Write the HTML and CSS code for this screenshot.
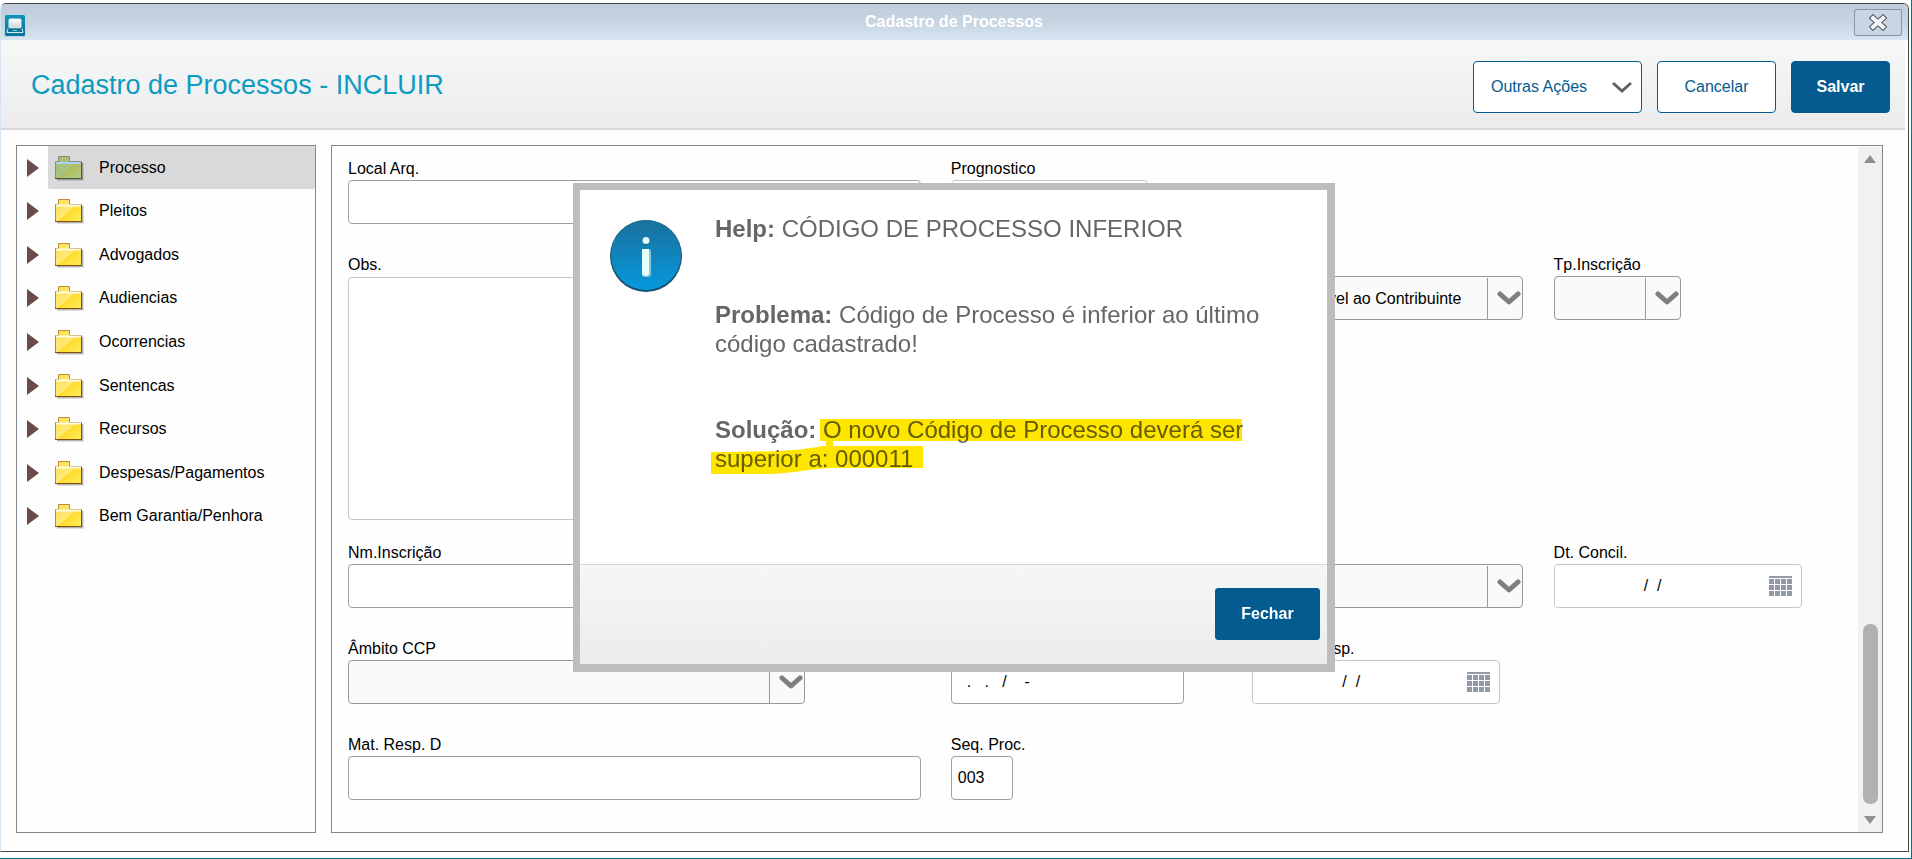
FILE: index.html
```html
<!DOCTYPE html>
<html lang="pt-BR">
<head>
  <meta charset="UTF-8">
  <meta name="viewport" content="width=device-width, initial-scale=1.0">
  <title>Cadastro de Processos</title>
  <link rel="stylesheet" href="styles.css">
</head>
<body>
  <svg class="sprite" aria-hidden="true">
    <defs>
      <linearGradient id="folderFill" x1="0" y1="0" x2="1" y2="1">
        <stop offset="0" stop-color="#ffe04e"/>
        <stop offset="0.5" stop-color="#ffe978"/>
        <stop offset="0.55" stop-color="#ffdc2e"/>
        <stop offset="1" stop-color="#ffee5a"/>
      </linearGradient>
      <linearGradient id="folderActive" x1="0" y1="0" x2="1" y2="1">
        <stop offset="0" stop-color="#a8ba75"/>
        <stop offset="0.5" stop-color="#a5c580"/>
        <stop offset="0.55" stop-color="#b3bb5e"/>
        <stop offset="1" stop-color="#aed08a"/>
      </linearGradient>
      <linearGradient id="infoFill" x1="0" y1="0" x2="0" y2="1">
        <stop offset="0" stop-color="#19709b"/>
        <stop offset="1" stop-color="#0699dc"/>
      </linearGradient>
      <linearGradient id="appFill" x1="0" y1="0" x2="0" y2="1">
        <stop offset="0" stop-color="#1295b7"/>
        <stop offset="1" stop-color="#0a7396"/>
      </linearGradient>
      <linearGradient id="screenFill" x1="0" y1="0" x2="0" y2="1">
        <stop offset="0" stop-color="#ffffff"/>
        <stop offset="1" stop-color="#c9d3da"/>
      </linearGradient>
    </defs>
    <symbol id="arrow" viewBox="0 0 12 18">
      <path d="M0 0L12 9L0 18z" fill="#6b4b49"/>
    </symbol>
    <symbol id="folder" viewBox="0 0 30 28">
      <path d="M2 7h27v18H2z" fill="#000" opacity="0.12"/>
      <path d="M2 7h26v17H2z" fill="#000" opacity="0.2"/>
      <path d="M0.5 22.5V5.5H3.5V0.5H14.5V5.5H26.5V22.5z" fill="url(#folderFill)" stroke="#b98d3c"/>
      <path d="M1 6.5h25" stroke="#fffbe0" stroke-width="2"/>
      <path d="M0 22.5h27M26.5 6v17" stroke="#85500c"/>
    </symbol>
    <symbol id="folder-active" viewBox="0 0 30 28">
      <path d="M2 7h27v18H2z" fill="#000" opacity="0.12"/>
      <path d="M2 7h26v17H2z" fill="#000" opacity="0.2"/>
      <path d="M0.5 22.5V5.5H3.5V0.5H14.5V5.5H26.5V22.5z" fill="url(#folderActive)" stroke="#84907a"/>
      <path d="M1 7h25" stroke="#a9d2f2" stroke-width="2"/>
      <path d="M0 22.5h27M26.5 6v17" stroke="#4d5740"/>
    </symbol>
    <symbol id="chevron" viewBox="0 0 24 14">
      <path d="M3 3L12 11L21 3" fill="none" stroke="#7f7f7f" stroke-width="5" stroke-linecap="round" stroke-linejoin="round"/>
    </symbol>
    <symbol id="calendar" viewBox="0 0 23 20">
      <path d="M0 0h23v2H0zM0 3h5v5H0zM6 3h5v5H6zM12 3h5v5H12zM18 3h5v5H18zM0 9h5v5H0zM6 9h5v5H6zM12 9h5v5H12zM18 9h5v5H18zM0 15h5v5H0zM6 15h5v5H6zM12 15h5v5H12zM18 15h5v5H18z" fill="#9299a7"/>
    </symbol>
  </svg>

  <div class="window">
    <div class="titlebar">
      <svg class="app-icon" width="22" height="23" viewBox="0 0 22 23">
        <rect x="0.5" y="0.5" width="21" height="22" rx="2" fill="url(#appFill)" stroke="#b9dbe8"/>
        <rect x="5" y="5" width="12" height="9" rx="1" fill="url(#screenFill)" stroke="#e6f1f6"/>
        <path d="M4 14.5L3 18.5H19L18 14.5" fill="#0a7396" stroke="#d5e6ee"/>
        <path d="M9 16.5h4" stroke="#9ec7d8"/>
      </svg>
      <span class="titlebar-text">Cadastro de Processos</span>
      <button class="close" type="button" aria-label="Fechar janela">
        <svg width="19" height="17" viewBox="0 0 19 17">
          <path d="M4 4L14 13M14 4L4 13" stroke="#50545e" stroke-width="6" stroke-linecap="square"/>
          <path d="M4 4L14 13M14 4L4 13" stroke="#f4f5f6" stroke-width="4" stroke-linecap="square"/>
        </svg>
      </button>
    </div>

    <div class="header">
      <h1>Cadastro de Processos - INCLUIR</h1>
      <div class="actions">
        <button class="btn btn-menu" type="button">Outras Ações
          <svg width="20" height="13" viewBox="0 0 20 13"><path d="M1 2L10 10L19 2" fill="none" stroke="#5f6368" stroke-width="3"/></svg>
        </button>
        <button class="btn btn-cancel" type="button">Cancelar</button>
        <button class="btn btn-primary" type="button">Salvar</button>
      </div>
    </div>

    <div class="content">
      <ul class="tree">
        <li class="active"><svg class="arrow"><use href="#arrow"/></svg><a href="#"><svg class="folder"><use href="#folder-active"/></svg>Processo</a></li>
        <li><svg class="arrow"><use href="#arrow"/></svg><a href="#"><svg class="folder"><use href="#folder"/></svg>Pleitos</a></li>
        <li><svg class="arrow"><use href="#arrow"/></svg><a href="#"><svg class="folder"><use href="#folder"/></svg>Advogados</a></li>
        <li><svg class="arrow"><use href="#arrow"/></svg><a href="#"><svg class="folder"><use href="#folder"/></svg>Audiencias</a></li>
        <li><svg class="arrow"><use href="#arrow"/></svg><a href="#"><svg class="folder"><use href="#folder"/></svg>Ocorrencias</a></li>
        <li><svg class="arrow"><use href="#arrow"/></svg><a href="#"><svg class="folder"><use href="#folder"/></svg>Sentencas</a></li>
        <li><svg class="arrow"><use href="#arrow"/></svg><a href="#"><svg class="folder"><use href="#folder"/></svg>Recursos</a></li>
        <li><svg class="arrow"><use href="#arrow"/></svg><a href="#"><svg class="folder"><use href="#folder"/></svg>Despesas/Pagamentos</a></li>
        <li><svg class="arrow"><use href="#arrow"/></svg><a href="#"><svg class="folder"><use href="#folder"/></svg>Bem Garantia/Penhora</a></li>
      </ul>

      <div class="panel">
        <form class="form">
          <div class="field col-1 row-1 w-full">
            <label for="localArq">Local Arq.</label>
            <input type="text" id="localArq">
          </div>
          <div class="field col-3 row-1 w-small">
            <label for="prognostico">Prognostico</label>
            <input type="text" id="prognostico" class="light">
          </div>

          <div class="field col-1 row-2 w-full">
            <label for="obs">Obs.</label>
            <textarea id="obs"></textarea>
          </div>
          <div class="field col-4 row-2 w-wide">
            <div class="select align-right no-label">
              <select aria-label="Aplicação"><option>Aplicável ao Contribuinte</option></select>
              <svg><use href="#chevron"/></svg>
            </div>
          </div>
          <div class="field col-5 row-2 w-select">
            <label for="tpInscricao">Tp.Inscrição</label>
            <div class="select">
              <select id="tpInscricao"><option></option></select>
              <svg><use href="#chevron"/></svg>
            </div>
          </div>

          <div class="field col-1 row-3 w-full">
            <label for="nmInscricao">Nm.Inscrição</label>
            <input type="text" id="nmInscricao">
          </div>
          <div class="field col-4 row-3 w-wide">
            <div class="select no-label">
              <select aria-label="Tipo"><option></option></select>
              <svg><use href="#chevron"/></svg>
            </div>
          </div>
          <div class="field col-5 row-3 w-date">
            <label for="dtConcil">Dt. Concil.</label>
            <div class="date">
              <input type="text" id="dtConcil" value="/  /">
              <button type="button" aria-label="Abrir calendário"><svg><use href="#calendar"/></svg></button>
            </div>
          </div>

          <div class="field col-1 row-4 w-ambito">
            <label for="ambito">Âmbito CCP</label>
            <div class="select">
              <select id="ambito"><option></option></select>
              <svg><use href="#chevron"/></svg>
            </div>
          </div>
          <div class="field col-3 row-4 w-cnpj">
            <input type="text" class="no-label" aria-label="CNPJ" value="  .   .   /    -">
          </div>
          <div class="field col-4 row-4 w-date">
            <label for="dtResp">Data da Resp.</label>
            <div class="date">
              <input type="text" id="dtResp" value="/  /">
              <button type="button" aria-label="Abrir calendário"><svg><use href="#calendar"/></svg></button>
            </div>
          </div>

          <div class="field col-1 row-5 w-full">
            <label for="matResp">Mat. Resp. D</label>
            <input type="text" id="matResp">
          </div>
          <div class="field col-3 row-5 w-seq">
            <label for="seqProc">Seq. Proc.</label>
            <input type="text" id="seqProc" value="003">
          </div>
        </form>
        <div class="scrollbar">
          <svg width="12" height="8" viewBox="0 0 12 8"><path d="M6 0L12 8H0z" fill="#8f8f8f"/></svg>
          <div class="thumb"></div>
          <svg width="12" height="8" viewBox="0 0 12 8"><path d="M0 0H12L6 8z" fill="#8f8f8f"/></svg>
        </div>
      </div>
    </div>
  </div>

  <div class="overlay">
    <div class="modal" role="dialog" aria-label="Help">
      <div class="modal-body">
        <svg class="info" width="72" height="72" viewBox="0 0 72 72">
          <circle cx="36" cy="36" r="36" fill="#174f6c"/>
          <circle cx="36" cy="35" r="35" fill="url(#infoFill)"/>
          <circle cx="36" cy="21" r="4" fill="#174f6c" opacity="0.5"/>
          <circle cx="36" cy="20.5" r="3.5" fill="#e4ffff"/>
          <rect x="32" y="29" width="9" height="28" rx="3" fill="#8cc4da"/>
          <path d="M32 29H39V53Q39 56 35.5 56Q32 56 32 53z" fill="#e4ffff"/>
        </svg>
        <div class="modal-text">
          <p><strong>Help:</strong> CÓDIGO DE PROCESSO INFERIOR</p>
          <p><strong>Problema:</strong> Código de Processo é inferior ao último código cadastrado!</p>
          <p class="solution"><strong>Solução:</strong> O novo Código de Processo deverá ser superior a: 000011
            <svg class="marker" width="540" height="62" viewBox="0 0 540 62">
              <path d="M111 4H533V26H124V31H214V53H121C101 54 86 58 61 59H2V37C41 37 86 37 113 31H117V26H111z" fill="#ffe600"/>
            </svg>
          </p>
        </div>
      </div>
      <div class="modal-footer">
        <button class="btn btn-primary btn-close" type="button">Fechar</button>
      </div>
    </div>
  </div>
</body>
</html>
```
FILE: styles.css
```css
* {
  box-sizing: border-box;
}

body {
  margin: 0;
  height: 100vh;
  padding: 3px 2px 6px 0;
  border-right: 1px solid #007588;
  border-bottom: 1px solid #007588;
  font-family: "Liberation Sans", Arial, sans-serif;
  font-size: 16px;
  color: #000;
  background: #fff;
  overflow: hidden;
}

button, input, select, textarea {
  font: inherit;
  color: inherit;
}

.sprite {
  position: absolute;
  width: 0;
  height: 0;
}

.window {
  display: flex;
  flex-direction: column;
  height: 100%;
  border: 1px solid #45464a;
  border-left-color: #d6e3f1;
  border-radius: 6px 6px 0 0;
  background: #fefefe;
  overflow: hidden;
}

/* title bar */
.titlebar {
  display: flex;
  align-items: center;
  height: 36px;
  padding: 0 6px 0 3px;
  background: linear-gradient(#c0cddb, #c6d3e1 50%, #d7e4f2);
}

.app-icon {
  margin-top: 6px;
}

.titlebar-text {
  flex: 1;
  padding: 0 0 1px 28px;
  text-align: center;
  font-weight: bold;
  color: #fff;
}

.close {
  display: flex;
  align-items: center;
  justify-content: center;
  width: 48px;
  height: 27px;
  padding: 0;
  border: 1px solid #8396ae;
  border-radius: 2px;
  background: #c8d5e3;
}

/* header */
.header {
  display: flex;
  align-items: flex-start;
  justify-content: space-between;
  height: 90px;
  margin-right: 3px;
  padding: 21px 15px 0 30px;
  border-bottom: 2px solid #d9dadc;
  background: linear-gradient(#f6f8f7, #ececef);
}

.header h1 {
  margin: 6px 0 0;
  font-size: 27px;
  line-height: 36px;
  font-weight: normal;
  color: #0d9bbf;
}

.actions {
  display: flex;
  gap: 15px;
}

.btn {
  height: 52px;
  padding: 0;
  border: 1px solid #045b90;
  border-radius: 4px;
  background: #fff;
  color: #045b90;
  cursor: pointer;
}

.btn-menu {
  display: flex;
  align-items: center;
  justify-content: space-between;
  width: 169px;
  padding: 0 9px 0 17px;
}

.btn-cancel {
  width: 119px;
}

.btn-primary {
  width: 99px;
  background: #045b90;
  color: #fff;
  font-weight: bold;
}

/* content */
.content {
  flex: 1;
  display: flex;
  gap: 15px;
  padding: 15px 25px 18px 15px;
}

.tree {
  width: 300px;
  margin: 0;
  padding: 0 0 294px;
  border: 1px solid #82868f;
  list-style: none;
  display: grid;
  grid-template-rows: repeat(9, minmax(0, 1fr));
}

.tree li {
  display: flex;
  align-items: center;
}

.tree a {
  flex: 1;
  display: flex;
  align-items: center;
  gap: 14px;
  height: 43px;
  padding-left: 7px;
  border-radius: 2px;
  color: #000;
  text-decoration: none;
}

.tree .active a {
  background: #d9d9d9;
}

.arrow {
  width: 12px;
  height: 18px;
  margin: 0 9px 0 10px;
}

.folder {
  width: 30px;
  height: 28px;
  margin-top: 4px;
}

.panel {
  flex: 1;
  display: flex;
  border: 1px solid #82868f;
}

.form {
  flex: 1;
  display: grid;
  grid-template-columns: repeat(5, 1fr);
  grid-template-rows: 96px 288px 96px 96px 96px;
  padding: 14px 3px 0 16px;
}

.col-1 { grid-column: 1 / span 2; }
.col-3 { grid-column: 3; }
.col-4 { grid-column: 4; }
.col-5 { grid-column: 5; }
.row-1 { grid-row: 1; }
.row-2 { grid-row: 2; }
.row-3 { grid-row: 3; }
.row-4 { grid-row: 4; }
.row-5 { grid-row: 5; }

.w-full { width: 95%; }
.w-small { width: 197px; }
.w-wide { width: 90%; }
.w-select { width: 127px; }
.w-date { width: 248px; }
.w-ambito { width: 457px; }
.w-cnpj { width: 233px; }
.w-seq { width: 62px; }

.field label {
  display: block;
  height: 20px;
  line-height: 18px;
  white-space: nowrap;
}

.field input, .field select, .field textarea {
  display: block;
  width: 100%;
  height: 44px;
  padding: 0 6px;
  border: 1px solid #97a2a5;
  border-radius: 4px;
  background: #fff;
}

.field textarea {
  height: 243px;
  margin-top: 1px;
  border-color: #c4c8c8;
  resize: none;
}

.field .light {
  border-color: #c4c8c8;
}

.field .no-label {
  margin-top: 20px;
}

.select {
  position: relative;
}

.field select {
  appearance: none;
  padding-right: 61px;
  border-color: #999;
  background: linear-gradient(#999, #999) right 34px top 1px / 1px 100% no-repeat #fafafa;
}

.align-right select {
  text-align: right;
  text-align-last: right;
}

.select svg {
  position: absolute;
  right: 2px;
  top: 15px;
  width: 24px;
  height: 14px;
  pointer-events: none;
}

.date {
  display: flex;
  height: 44px;
  padding-right: 9px;
  border: 1px solid #c4c8c8;
  border-radius: 4px;
  background: #fff;
}

.date .no-label {
  margin: 0;
}

.date input {
  flex: 1;
  min-width: 0;
  height: 42px;
  padding: 0 18px 0 0;
  border: none;
  text-align: center;
}

.date button {
  display: flex;
  align-items: center;
  padding: 0;
  border: none;
  background: none;
}

.date svg {
  width: 23px;
  height: 20px;
}

.scrollbar {
  display: flex;
  flex-direction: column;
  align-items: center;
  width: 24px;
  margin-top: 1px;
  padding: 8px 0;
  background: #f1f1f1;
}

.thumb {
  width: 15px;
  height: 180px;
  margin: auto 0 12px;
  border-radius: 7px;
  background: #b1b1b1;
}

/* modal */
.overlay {
  position: fixed;
  inset: 0;
  display: flex;
  align-items: flex-start;
  justify-content: center;
  padding-top: 183px;
  padding-right: 4px;
}

.modal {
  width: 762px;
  border: 7px solid #bdbdbd;
  border-right-width: 8px;
  border-bottom-width: 8px;
  background: #fff;
}

.modal-body {
  display: flex;
  gap: 33px;
  min-height: 374px;
  padding: 24px 16px 0 30px;
}

.info {
  flex: none;
  margin-top: 6px;
}

.modal-text {
  font-size: 24px;
  line-height: 29px;
  color: #666;
}

.modal-text p {
  margin: 0 0 57px;
}

.solution {
  position: relative;
}

/* highlighter stroke over the answer */
.marker {
  position: absolute;
  left: -6px;
  top: 0;
  mix-blend-mode: multiply;
}

.modal-footer {
  display: flex;
  justify-content: flex-end;
  height: 100px;
  padding: 23px 7px 0 0;
  border-top: 1px solid #d6d8d8;
  background: linear-gradient(#f5f7f6, #ececef);
}

.btn-close {
  width: 105px;
  border-radius: 3px;
}
```
